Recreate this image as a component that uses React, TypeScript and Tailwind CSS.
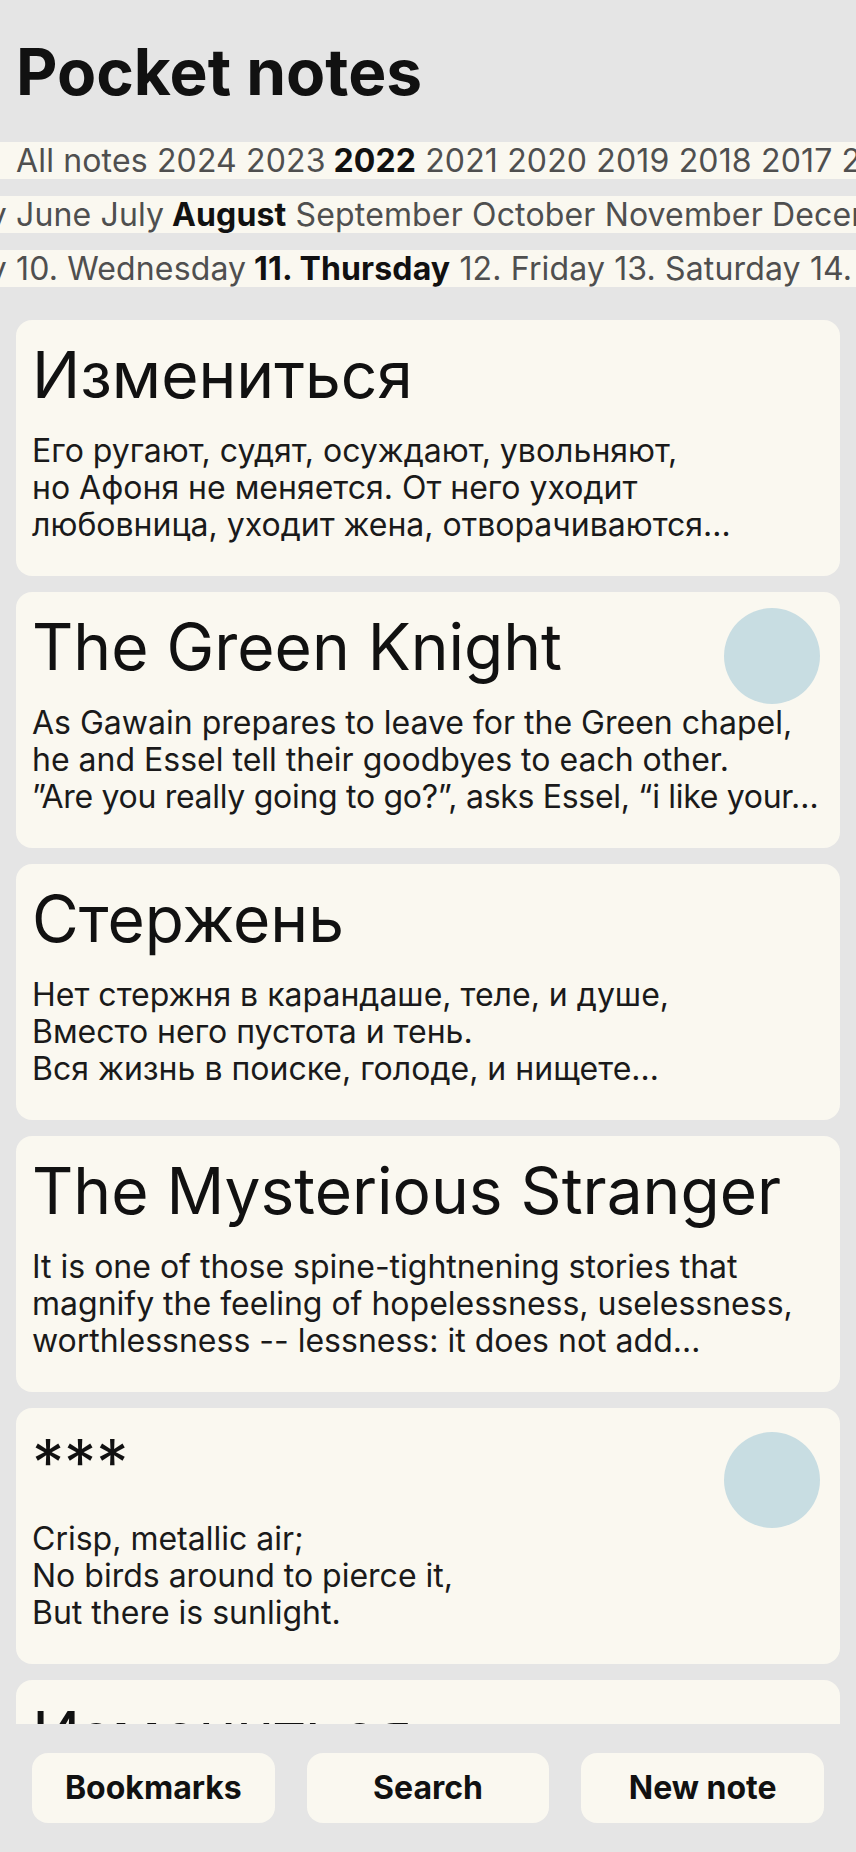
import React from 'react';

type Note = {
  title: string;
  lines: string[];
  dot?: 'top' | 'low';
  tight?: boolean;
};

const notes: Note[] = [
  {
    title: 'Измениться',
    lines: [
      'Его ругают, судят, осуждают, увольняют,',
      'но Афоня не меняется. От него уходит',
      'любовница, уходит жена, отворачиваются…',
    ],
  },
  {
    title: 'The Green Knight',
    dot: 'top',
    tight: true,
    lines: [
      'As Gawain prepares to leave for the Green chapel,',
      'he and Essel tell their goodbyes to each other.',
      '”Are you really going to go?”, asks Essel, “i like your…',
    ],
  },
  {
    title: 'Стержень',
    lines: [
      'Нет стержня в карандаше, теле, и душе,',
      'Вместо него пустота и тень.',
      'Вся жизнь в поиске, голоде, и нищете…',
    ],
  },
  {
    title: 'The Mysterious Stranger',
    lines: [
      'It is one of those spine-tightnening stories that',
      'magnify the feeling of hopelessness, uselessness,',
      'worthlessness -- lessness: it does not add…',
    ],
  },
  {
    title: '***',
    dot: 'low',
    lines: ['Crisp, metallic air;', 'No birds around to pierce it,', 'But there is sunlight.'],
  },
  {
    title: 'Измениться',
    lines: [
      'Его ругают, судят, осуждают, увольняют,',
      'но Афоня не меняется. От него уходит',
      'любовница, уходит жена, отворачиваются…',
    ],
  },
];

const years = ['2024', '2023', '2022', '2021', '2020', '2019', '2018', '2017', '2016', '2015'];
const months = ['June', 'July', 'August', 'September', 'October', 'November', 'December'];
const days = ['10. Wednesday', '11. Thursday', '12. Friday', '13. Saturday', '14. Sunday', '15. Monday'];

const FilterRow = ({
  items,
  selected,
  before,
}: {
  items: string[];
  selected: string;
  before?: string;
}) => (
  <div className="flex h-[37px] items-center overflow-hidden whitespace-nowrap bg-[#faf8f0] text-[32px] leading-[37px] tracking-[0.15px] text-[#4f4f4f]">
    <div className="flex w-4 shrink-0 justify-end">
      {before && <span className="whitespace-nowrap">{before}&nbsp;</span>}
    </div>
    {items.map((item, i) => (
      <span
        key={item}
        className={item === selected ? 'shrink-0 font-bold text-[#111111]' : 'shrink-0'}
      >
        {i > 0 ? '\u00a0' : ''}
        {item}
      </span>
    ))}
  </div>
);

const NoteCard = ({ note }: { note: Note }) => (
  <div className="relative h-64 shrink-0 overflow-hidden rounded-2xl bg-[#faf8f0] px-4 pt-[18px]">
    {note.dot && (
      <div
        className={
          note.dot === 'top'
            ? 'absolute right-5 top-4 h-24 w-24 rounded-full bg-[#c8dde2]'
            : 'absolute right-5 top-6 h-24 w-24 rounded-full bg-[#c8dde2]'
        }
      />
    )}
    <h2 className="text-[64px] leading-[73.6px] font-normal text-[#111111]">{note.title}</h2>
    <div className="mt-5 text-[32px] leading-[37px] text-[#1a1a1a]">
      {note.lines.map((line, i) => (
        <div
          key={i}
          className={
            note.tight && i === 2 ? 'whitespace-nowrap tracking-[-0.3px]' : 'whitespace-nowrap'
          }
        >
          {line}
        </div>
      ))}
    </div>
  </div>
);

export default function App() {
  return (
    <div className="flex h-screen flex-col overflow-hidden bg-[#e5e5e5] font-['Inter',sans-serif]">
      <header className="shrink-0 pt-8">
        <h1 className="px-4 text-[64px] leading-[80px] font-bold text-[#111111]">Pocket notes</h1>
        <div className="mt-[30px] flex flex-col gap-[17px]">
          <FilterRow items={['All notes', ...years]} selected="2022" />
          <FilterRow items={months} selected="August" before="April May" />
          <FilterRow items={days} selected="11. Thursday" before="9. Tuesday" />
        </div>
      </header>

      <main className="flex flex-1 flex-col gap-4 overflow-hidden px-4 pt-[33px]">
        {notes.map((note, i) => (
          <NoteCard key={i} note={note} />
        ))}
      </main>

      <nav className="flex h-32 shrink-0 items-center gap-8 px-8">
        {['Bookmarks', 'Search', 'New note'].map((label) => (
          <button
            key={label}
            className="h-[70px] flex-1 rounded-2xl bg-[#faf8f0] text-[32px] font-bold text-[#111111]"
          >
            {label}
          </button>
        ))}
      </nav>
    </div>
  );
}
